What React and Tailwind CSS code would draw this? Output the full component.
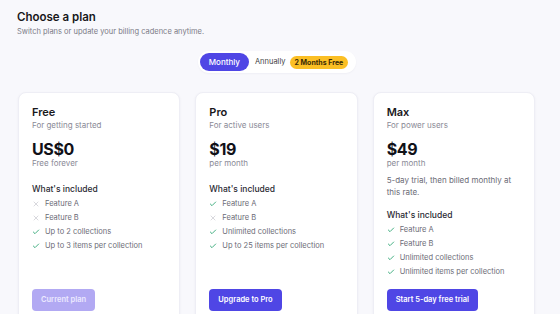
import { Check, X } from 'lucide-react';

const plans = [
  {
    name: 'Free',
    tagline: 'For getting started',
    price: 'US$0',
    period: 'Free forever',
    features: [
      { label: 'Feature A', on: false },
      { label: 'Feature B', on: false },
      { label: 'Up to 2 collections', on: true },
      { label: 'Up to 3 items per collection', on: true },
    ],
    cta: 'Current plan',
    disabled: true,
  },
  {
    name: 'Pro',
    tagline: 'For active users',
    price: '$19',
    period: 'per month',
    features: [
      { label: 'Feature A', on: true },
      { label: 'Feature B', on: false },
      { label: 'Unlimited collections', on: true },
      { label: 'Up to 25 items per collection', on: true },
    ],
    cta: 'Upgrade to Pro',
  },
  {
    name: 'Max',
    tagline: 'For power users',
    price: '$49',
    period: 'per month',
    note: '5-day trial, then billed monthly at this rate.',
    features: [
      { label: 'Feature A', on: true },
      { label: 'Feature B', on: true },
      { label: 'Unlimited collections', on: true },
      { label: 'Unlimited items per collection', on: true },
    ],
    cta: 'Start 5-day free trial',
  },
];

function PlanCard({ plan }) {
  return (
    <div className="flex flex-col rounded-lg border border-[#eeeef5] bg-white px-[13px] pt-[12px] pb-[14px] shadow-[0_1px_3px_rgba(30,30,80,0.05)]">
      <h3 className="text-[11px] leading-[14px] font-semibold text-[#18181b]">{plan.name}</h3>
      <p className="mt-[1px] text-[8px] leading-[11px] text-[#8a8a96]">{plan.tagline}</p>
      <div className="mt-[9px] text-[16px] leading-[18px] font-bold tracking-tight text-[#111118]">{plan.price}</div>
      <p className="text-[8px] leading-[11px] text-[#8a8a96]">{plan.period}</p>
      {plan.note && (
        <p className="mt-[5px] text-[8px] leading-[12px] text-[#6b6b76]">{plan.note}</p>
      )}
      <h4
        className={
          plan.note
            ? 'mt-[12px] text-[8.5px] leading-[11px] font-medium text-[#2a2a33]'
            : 'mt-[15px] text-[8.5px] leading-[11px] font-medium text-[#2a2a33]'
        }
      >
        What's included
      </h4>
      <ul className="mt-[2px] flex flex-col">
        {plan.features.map((f) => (
          <li key={f.label} className="flex h-[14px] items-center gap-[5px] text-[7.5px] text-[#6b6b76]">
            {f.on ? (
              <Check className="h-[8px] w-[8px] shrink-0 text-[#22a06b]" strokeWidth={2.5} />
            ) : (
              <X className="h-[8px] w-[8px] shrink-0 text-[#c4c4cc]" strokeWidth={2} />
            )}
            <span>{f.label}</span>
          </li>
        ))}
      </ul>
      <div className="mt-auto flex pt-[10px]">
        <button
          className={
            plan.disabled
              ? 'h-[22px] rounded-[4px] bg-[#b2a9f3] px-[9px] text-[7.5px] font-semibold text-[#ece9ff]'
              : 'h-[22px] rounded-[4px] bg-[#4f46e5] px-[9px] text-[7.5px] font-semibold text-white'
          }
        >
          {plan.cta}
        </button>
      </div>
    </div>
  );
}

export default function App() {
  return (
    <div className="min-h-screen bg-[#f8f8fc] font-['Inter',sans-serif]">
      <div className="px-[17px] pt-[10px]">
        <h1 className="text-[11.5px] leading-[14px] font-semibold text-[#18181b]">Choose a plan</h1>
        <p className="mt-[3px] text-[7.5px] leading-[10px] text-[#7a7a86]">
          Switch plans or update your billing cadence anytime.
        </p>
      </div>
      <div className="mt-[14px] flex justify-center pr-[6px]">
        <div className="flex items-center rounded-full bg-white p-[2px] pr-[8px] shadow-[0_1px_2px_rgba(30,30,80,0.04)]">
          <button className="h-[18px] rounded-full bg-[#4f46e5] px-[9px] text-[8px] font-medium text-white">
            Monthly
          </button>
          <span className="ml-[6px] text-[7.5px] text-[#3f3f46]">Annually</span>
          <span className="ml-[4px] rounded-full bg-[#fbbf24] px-[5px] py-[2px] text-[7px] leading-[9px] font-bold text-[#3a2a06]">
            2 Months Free
          </span>
        </div>
      </div>
      <div className="mt-[19px] ml-[18px] grid w-[517px] grid-cols-3 gap-[15px]">
        {plans.map((p) => (
          <PlanCard key={p.name} plan={p} />
        ))}
      </div>
    </div>
  );
}
